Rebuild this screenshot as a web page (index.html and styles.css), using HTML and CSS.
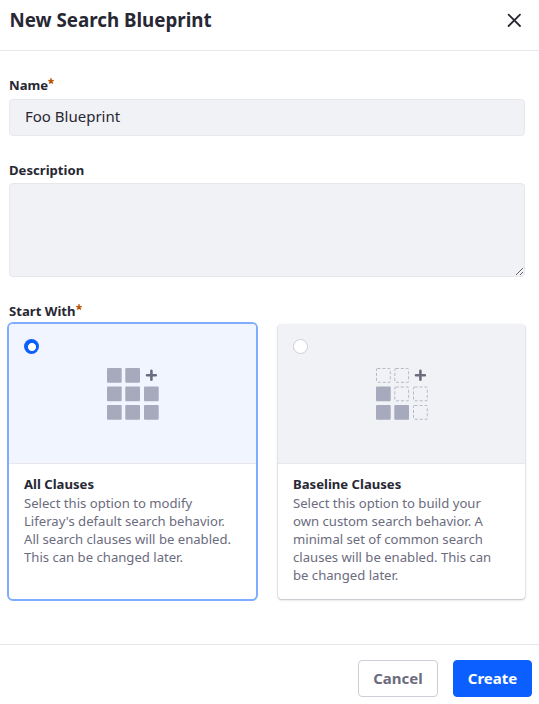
FILE: index.html
```html
<!DOCTYPE html>
<html lang="en">
<head>
<meta charset="utf-8">
<title>New Search Blueprint</title>
<link rel="stylesheet" href="styles.css">
</head>
<body>
<form class="modal">
  <header class="modal-header">
    <h1 class="modal-title">New Search Blueprint</h1>
    <button class="close" type="button" aria-label="Close">
      <svg width="14" height="14" viewBox="0 0 14 14"><path d="M1.6 1.6l11.4 11.4M13 1.6L1.6 13" fill="none" stroke="#272833" stroke-width="1.8" stroke-linecap="round"/></svg>
    </button>
  </header>
  <main class="modal-body">
    <label class="label" for="name">Name<svg class="required" viewBox="0 0 6 6"><path d="M3 .2V3.2M.3 2.4L3 3.2l2.7-.8M1.3 5.5L3 3.2l1.7 2.3"/></svg></label>
    <input class="field" id="name" type="text" value="Foo Blueprint">
    <label class="label label-description" for="description">Description</label>
    <textarea class="field field-area" id="description"></textarea>
    <div class="label label-start">Start With<svg class="required" viewBox="0 0 6 6"><path d="M3 .2V3.2M.3 2.4L3 3.2l2.7-.8M1.3 5.5L3 3.2l1.7 2.3"/></svg></div>
    <div class="cards">
      <section class="card selected">
        <div class="card-image">
          <span class="radio"></span>
          <svg class="grid-icon" width="52" height="52" viewBox="0 0 52 52">
            <g fill="#a7a9bc">
              <rect width="14.7" height="14.7" rx="1"/><rect x="18.3" width="14.7" height="14.7" rx="1"/>
              <rect y="18.5" width="14.7" height="14.7" rx="1"/><rect x="18.3" y="18.5" width="14.7" height="14.7" rx="1"/><rect x="37" y="18.5" width="14.7" height="14.7" rx="1"/>
              <rect y="37" width="14.7" height="14.7" rx="1"/><rect x="18.3" y="37" width="14.7" height="14.7" rx="1"/><rect x="37" y="37" width="14.7" height="14.7" rx="1"/>
            </g>
            <path class="plus" d="M44.4 2.9v8.8M40 7.3h8.8"/>
          </svg>
        </div>
        <div class="card-text">
          <h2>All Clauses</h2>
          <p>Select this option to modify Liferay's default search behavior. All search clauses will be enabled. This can be changed later.</p>
        </div>
      </section>
      <section class="card">
        <div class="card-image">
          <span class="radio"></span>
          <svg class="grid-icon" width="52" height="52" viewBox="0 0 52 52">
            <g class="empty">
              <rect x=".5" y=".5" width="13.8" height="13.8" rx="1"/><rect x="18.8" y=".5" width="13.8" height="13.8" rx="1"/>
              <rect x="18.8" y="19" width="13.8" height="13.8" rx="1"/><rect x="37.5" y="19" width="13.8" height="13.8" rx="1"/><rect x="37.5" y="37.5" width="13.8" height="13.8" rx="1"/>
            </g>
            <g fill="#a7a9bc">
              <rect y="18.5" width="14.7" height="14.7" rx="1"/><rect y="37" width="14.7" height="14.7" rx="1"/><rect x="18.3" y="37" width="14.7" height="14.7" rx="1"/>
            </g>
            <path class="plus" d="M44.4 2.9v8.8M40 7.3h8.8"/>
          </svg>
        </div>
        <div class="card-text">
          <h2>Baseline Clauses</h2>
          <p>Select this option to build your own custom search behavior. A minimal set of common search clauses will be enabled. This can be changed later.</p>
        </div>
      </section>
    </div>
  </main>
  <footer class="modal-footer">
    <button class="btn" type="button">Cancel</button>
    <button class="btn primary" type="button">Create</button>
  </footer>
</form>
</body>
</html>
```
FILE: styles.css
```css
* { box-sizing: border-box; }
body, h1, h2, p { margin: 0; }
body {
  background: #fff;
  color: #272833;
  font-family: "Noto Sans", sans-serif;
}
.modal { display: flex; flex-direction: column; height: 704px; overflow: hidden; }
.modal-header {
  display: flex;
  justify-content: space-between;
  height: 51px;
  padding: 8px 17px 0 9.5px;
  border-bottom: 1px solid #e7e7ed;
}
.modal-title { font-size: 18.75px; font-weight: 700; line-height: 24px; }
.close { width: 14px; height: 14px; margin: 5px 1px 0 0; padding: 0; border: 0; background: none; }
.close svg { display: block; }
.modal-body { flex: 1; padding: 25px 13px 0 9px; }
.label { display: block; height: 23px; font-size: 13.125px; font-weight: 700; line-height: 19px; }
.label-description { margin-top: 24px; line-height: 20px; }
.label-start { margin-top: 24px; line-height: 21px; }
.required { width: 6px; height: 6px; vertical-align: 6px; fill: none; stroke: #b95000; stroke-width: 1.5; }
.field {
  display: block;
  width: 516px;
  height: 37px;
  padding: 0 15px 3px;
  border: 1px solid #e7e7ed;
  border-radius: 4px;
  outline: 0;
  background: #f1f2f5;
  color: #272833;
  font: 15px/22px "Noto Sans", sans-serif;
}
.field-area { height: 94px; resize: vertical; }
.cards { display: grid; grid-template-columns: 247px 247px; gap: 22px; }
.card {
  display: flex;
  flex-direction: column;
  height: 275px;
  border-radius: 4px;
  background: #fff;
  box-shadow: 0 1px 1px 0 #c9c9d1, 0 1px 3px 0 rgba(39, 40, 51, .15), -1px 0 0 #f1f2f5, 1px 0 0 #f1f2f5;
}
.selected { box-shadow: 0 0 0 2px #80acff; }
.card-image {
  position: relative;
  display: flex;
  align-items: center;
  justify-content: center;
  height: 140px;
  border-bottom: 1px solid #e7e7ed;
  border-radius: 4px 4px 0 0;
  background: #f1f2f5;
}
.selected .card-image { background: #f0f5ff; }
.grid-icon { margin-left: 1px; }
.radio {
  position: absolute;
  top: 15px;
  left: 15px;
  width: 15px;
  height: 15px;
  border: 1px solid #cdced9;
  border-radius: 50%;
  background: #fff;
}
.selected .radio {
  border: 0;
  background: radial-gradient(circle at 8px 8px, #fff 3.6px, #0b5fff 4.4px);
}
.plus { fill: none; stroke: #6b6c7e; stroke-width: 2.6; stroke-linecap: round; }
.empty { fill: none; stroke: #a7a9bc; stroke-width: .8; stroke-dasharray: 3 2; }
.card-text { padding: 11px 16px 0 15px; font-size: 13.125px; line-height: 18px; }
.card-text h2 { font-size: 13.125px; font-weight: 700; line-height: 19px; }
.card-text p { color: #6b6c7e; }
.modal-footer {
  display: flex;
  justify-content: flex-end;
  gap: 15px;
  height: 60px;
  padding: 15px 7px 0 0;
  border-top: 1px solid #e7e7ed;
}
.btn {
  width: 80px;
  height: 37px;
  padding: 0 0 2px;
  border: 1px solid #cdced9;
  border-radius: 4px;
  background: #fff;
  color: #6b6c7e;
  font: 700 15px/22px "Noto Sans", sans-serif;
}
.primary { width: 79px; border-color: #0b5fff; background: #0b5fff; color: #fff; }
```
